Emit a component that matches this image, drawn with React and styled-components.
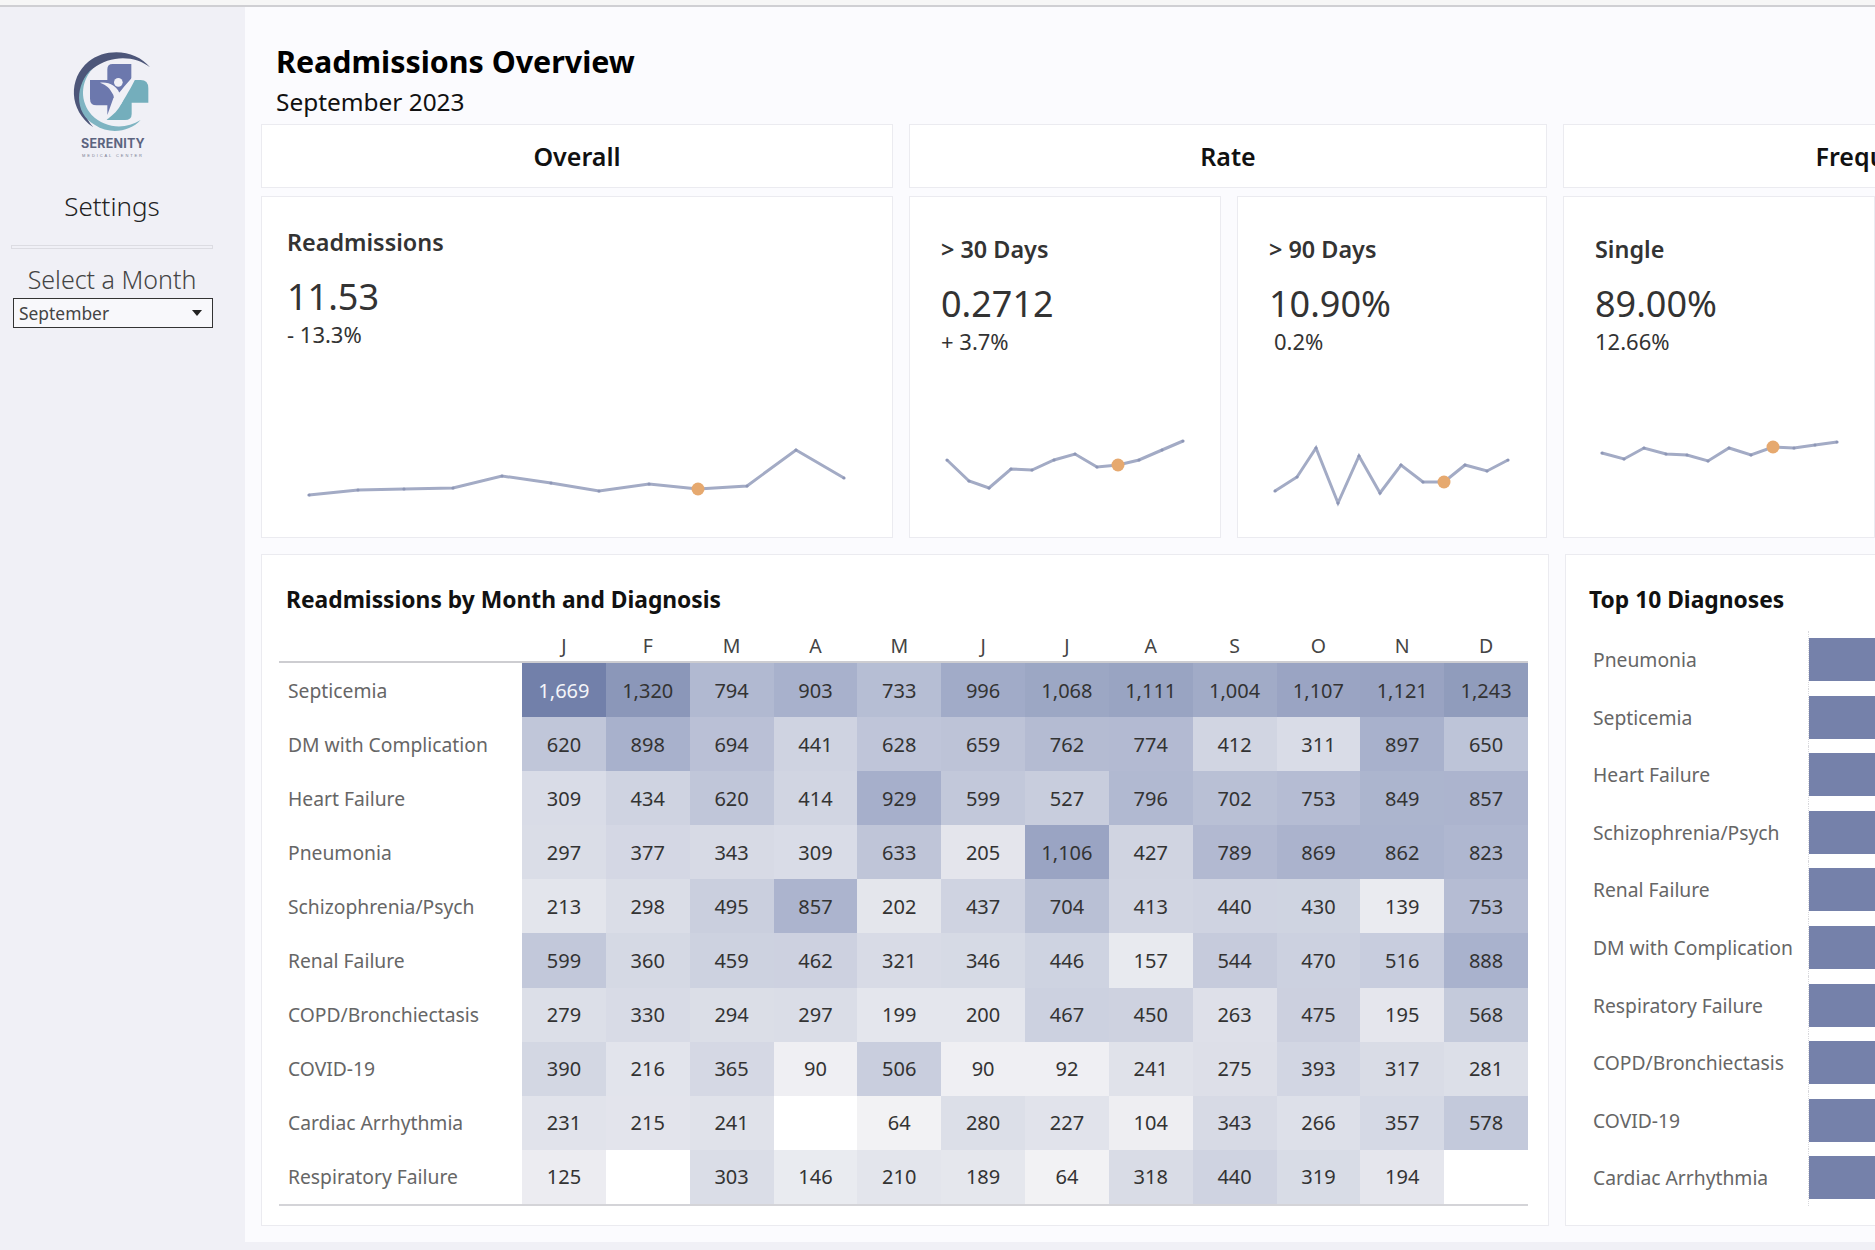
import React from 'react';
import styled, { createGlobalStyle } from 'styled-components';

const FONT = `"Noto Sans", "Open Sans", sans-serif`;

const GlobalStyle = createGlobalStyle`
    html, body {
        margin: 0;
        padding: 0;
        width: 1875px;
        height: 1250px;
        overflow: hidden;
        background: #f0f0f6;
        font-family: ${FONT};
    }
`;

const Page = styled.div`
    width: 1875px;
    height: 1250px;
    overflow: hidden;
    display: flex;
    flex-direction: column;
`;
const TopLine = styled.div`
    height: 5px;
    flex: none;
    background: #f6f6f6;
    border-bottom: 2px solid #cfcfd3;
`;
const Body = styled.div`
    display: flex;
    height: 1235px;
    flex: none;
`;
const Sidebar = styled.aside`
    width: 245px;
    flex: none;
    box-sizing: border-box;
    padding: 33px 32px 0 11px;
    background: #f0f0f6;
    display: flex;
    flex-direction: column;
    align-items: stretch;
`;
const LogoMark = styled.svg`
    display: block;
    width: 130px;
    height: 97px;
    margin: 0 auto;
`;
const LogoName = styled.div`
    text-align: center;
    font-family: "Inter", sans-serif;
    font-weight: 700;
    font-size: 12.5px;
    line-height: 14px;
    letter-spacing: 0.2px;
    padding-left: 2px;
    color: #5c6480;
`;
const LogoSub = styled.div`
    text-align: center;
    font-family: "Liberation Sans", sans-serif;
    font-size: 4px;
    line-height: 8px;
    margin-top: 1px;
    letter-spacing: 1.9px;
    padding-left: 2px;
    color: #777c92;
`;
const SideTitle = styled.div`
    text-align: center;
    font-size: 26px;
    line-height: 34px;
    font-weight: 300;
    color: #222;
    margin-top: 29px;
`;
const Divider = styled.div`
    height: 2px;
    margin-top: 22px;
    border: 1px solid #dcdce2;
    background: #f0f0f6;
`;
const FilterLabel = styled.div`
    text-align: center;
    font-size: 25px;
    line-height: 34px;
    font-weight: 300;
    color: #444;
    margin-top: 13px;
`;
const FilterBox = styled.div`
    margin: 2px 0 0 2px;
    height: 30px;
    box-sizing: border-box;
    border: 1px solid #333;
    background: #f8f8fb;
    display: flex;
    align-items: center;
    justify-content: space-between;
    padding: 0 10px 0 5px;
    font-size: 17.4px;
    color: #444;
`;
const Caret = styled.span`
    width: 0;
    height: 0;
    border-left: 5px solid transparent;
    border-right: 5px solid transparent;
    border-top: 6px solid #222;
`;

const Main = styled.main`
    flex: 1;
    min-width: 0;
    overflow: hidden;
    box-sizing: border-box;
    background: #fbfbfe;
    padding: 35px 0 0 16px;
`;
const Heading = styled.header`
    margin-left: 15px;
    margin-bottom: 6px;
`;
const PageTitle = styled.h1`
    margin: 0 0 4px;
    font-size: 30.4px;
    line-height: 40px;
    font-weight: 700;
    color: #000;
`;
const PageSub = styled.div`
    font-size: 24.4px;
    line-height: 32px;
    color: #111;
`;
const TopRow = styled.div`
    display: flex;
    gap: 16px;
    width: 1900px;
`;
const Section = styled.section`
    width: ${(p) => p.$width}px;
    flex: none;
    display: flex;
    flex-direction: column;
    gap: 8px;
`;
const SectionHead = styled.div`
    height: 64px;
    box-sizing: border-box;
    display: flex;
    align-items: center;
    justify-content: center;
    background: #fff;
    border: 1px solid #ebebf0;
    font-size: 25px;
    font-weight: 600;
    color: #111;
`;
const CardRow = styled.div`
    display: flex;
    gap: 16px;
`;
const Card = styled.div`
    width: ${(p) => (p.$width ? `${p.$width}px` : 'auto')};
    flex: none;
    height: 342px;
    box-sizing: border-box;
    background: #fff;
    border: 1px solid #ebebf0;
    display: flex;
    flex-direction: column;
`;
const CardText = styled.div`
    padding: ${(p) => p.$top}px 0 0 ${(p) => p.$left}px;
`;
const CardTitle = styled.div`
    font-size: 23.4px;
    line-height: 30px;
    font-weight: 600;
    color: #333;
`;
const CardValue = styled.div`
    margin-top: 18px;
    font-size: 36px;
    line-height: 44px;
    color: #333;
`;
const CardDelta = styled.div`
    margin-top: 1px;
    margin-left: ${(p) => p.$indent || 0}px;
    font-size: 22px;
    line-height: 28px;
    color: #333;
`;
const Spark = styled.svg`
    display: block;
    margin-top: auto;
    width: 100%;
    height: 140px;
`;

const BottomRow = styled.div`
    display: flex;
    gap: 16px;
    margin-top: 16px;
    width: 1900px;
`;
const Panel = styled.section`
    width: ${(p) => p.$width}px;
    height: 672px;
    flex: none;
    box-sizing: border-box;
    background: #fff;
    border: 1px solid #ebebf0;
    padding: ${(p) => p.$pad};
`;
const PanelTitle = styled.h2`
    margin: 0 0 0 ${(p) => p.$indent}px;
    font-size: 22.8px;
    line-height: 32px;
    font-weight: 700;
    color: #111;
`;
const HeatGrid = styled.div`
    display: grid;
    grid-template-columns: 243px repeat(12, 1fr);
`;
const HeatHeader = styled(HeatGrid)`
    margin-top: 14px;
    height: 31px;
    border-bottom: 2px solid #cdcdd1;
`;
const HeatHead = styled.div`
    display: flex;
    align-items: center;
    justify-content: center;
    font-size: 19.5px;
    color: #444;
`;
const HeatBody = styled(HeatGrid)`
    grid-auto-rows: 54.1px;
    border-bottom: 2px solid #d4d4d8;
`;
const RowLabel = styled.div`
    display: flex;
    align-items: center;
    padding-left: 9px;
    font-size: 19.3px;
    color: #666;
`;
const stops = [
    [0, [255, 255, 255]],
    [50, [243, 243, 245]],
    [300, [218, 221, 231]],
    [620, [192, 198, 217]],
    [900, [168, 177, 204]],
    [1320, [139, 151, 185]],
    [1669, [114, 128, 170]],
];
const heatColor = (v) => {
    if (v == null) return '#fff';
    for (let i = 1; i < stops.length; i++) {
        if (v <= stops[i][0]) {
            const [a, ca] = stops[i - 1];
            const [b, cb] = stops[i];
            const t = (v - a) / (b - a);
            return `rgb(${ca.map((c, j) => Math.round(c + (cb[j] - c) * t)).join(',')})`;
        }
    }
    return 'rgb(114,128,170)';
};
const HeatCell = styled.div`
    display: flex;
    align-items: center;
    justify-content: center;
    font-size: 20px;
    color: ${(p) => (p.$value > 1500 ? '#f4f5f9' : '#333')};
    background: ${(p) => heatColor(p.$value)};
`;

const BarList = styled.div`
    margin-top: 15px;
    display: grid;
    grid-template-columns: 219px 1fr;
`;
const BarLabel = styled.div`
    display: flex;
    align-items: center;
    height: 57.55px;
    padding-left: 4px;
    font-size: 19.3px;
    color: #666;
`;
const BarCell = styled.div`
    display: flex;
    align-items: center;
    height: 57.55px;
    border-left: 1px dotted #d8d8dc;
`;
const Bar = styled.div`
    height: 43px;
    width: 100%;
    background: #7581aa;
`;

const sparks = {
    readmissions: {
        box: '262 397 630 140',
        pts: [[309, 495], [358, 490], [404, 489], [453, 488], [502, 476], [551, 483], [599, 491], [649, 484], [698, 489], [747, 486], [796, 450], [844, 478]],
    },
    days30: {
        box: '910 397 310 140',
        pts: [[947, 460], [969, 481], [989, 488], [1011, 469], [1032, 470], [1054, 460], [1075, 454], [1097, 467], [1118, 465], [1139, 460], [1162, 450], [1183, 441]],
    },
    days90: {
        box: '1238 397 308 140',
        pts: [[1275, 491], [1297, 477], [1316, 448], [1338, 503], [1359, 456], [1380, 493], [1401, 465], [1423, 482], [1444, 482], [1465, 465], [1487, 471], [1508, 460]],
    },
    single: {
        box: '1564 397 310 140',
        pts: [[1602, 453], [1624, 459], [1644, 448], [1666, 454], [1687, 455], [1708, 461], [1729, 448], [1751, 455], [1773, 447], [1794, 448], [1815, 445], [1837, 442]],
    },
};

const Sparkline = ({ name }) => {
    const { box, pts } = sparks[name];
    const dot = pts[8];
    return (
        <Spark viewBox={box}>
            <polyline points={pts.map((p) => p.join(',')).join(' ')} fill="none" stroke="#a3abc5" strokeWidth="3" />
            {pts.map((p, i) => <circle key={i} cx={p[0]} cy={p[1]} r="1.6" fill="#8d96b6" />)}
            <circle cx={dot[0]} cy={dot[1]} r="6.5" fill="#e6a96f" />
        </Spark>
    );
};

const months = ['J', 'F', 'M', 'A', 'M', 'J', 'J', 'A', 'S', 'O', 'N', 'D'];
const rows = [
    ['Septicemia', [1669, 1320, 794, 903, 733, 996, 1068, 1111, 1004, 1107, 1121, 1243]],
    ['DM with Complication', [620, 898, 694, 441, 628, 659, 762, 774, 412, 311, 897, 650]],
    ['Heart Failure', [309, 434, 620, 414, 929, 599, 527, 796, 702, 753, 849, 857]],
    ['Pneumonia', [297, 377, 343, 309, 633, 205, 1106, 427, 789, 869, 862, 823]],
    ['Schizophrenia/Psych', [213, 298, 495, 857, 202, 437, 704, 413, 440, 430, 139, 753]],
    ['Renal Failure', [599, 360, 459, 462, 321, 346, 446, 157, 544, 470, 516, 888]],
    ['COPD/Bronchiectasis', [279, 330, 294, 297, 199, 200, 467, 450, 263, 475, 195, 568]],
    ['COVID-19', [390, 216, 365, 90, 506, 90, 92, 241, 275, 393, 317, 281]],
    ['Cardiac Arrhythmia', [231, 215, 241, null, 64, 280, 227, 104, 343, 266, 357, 578]],
    ['Respiratory Failure', [125, null, 303, 146, 210, 189, 64, 318, 440, 319, 194, null]],
];
const top10 = ['Pneumonia', 'Septicemia', 'Heart Failure', 'Schizophrenia/Psych', 'Renal Failure', 'DM with Complication', 'Respiratory Failure', 'COPD/Bronchiectasis', 'COVID-19', 'Cardiac Arrhythmia'];

const Logo = () => (
    <LogoMark viewBox="-9 0 390 291">
        <path d="M172 120V88Q172 72 188 72H244V125L190 175L172 225V196H140Q120 196 120 176V120Z" fill="#6c78ad" />
        <path d="M244 120H272Q295 120 295 145V188H245V222Q245 240 225 240H170L215 190Z" fill="#74aebc" />
        <path d="M300 82C260 30 170 20 115 65C55 115 55 210 130 262C85 210 75 130 130 85C180 45 255 45 300 82Z" fill="#4d5679" />
        <path d="M128 85C75 130 70 220 135 255C180 285 240 275 272 240C225 270 165 265 125 225C90 185 90 130 128 85Z" fill="#7fb4c2" />
        <path d="M150 128C180 125 200 140 208 158C225 135 250 110 270 85C255 125 230 165 215 190C205 210 190 225 172 238C190 205 195 180 190 165C180 145 170 135 150 128Z" fill="#f0f0f6" />
        <circle cx="205" cy="127" r="13" fill="#f0f0f6" />
    </LogoMark>
);

const App = () => (
    <Page>
        <GlobalStyle />
        <TopLine />
        <Body>
            <Sidebar>
                <Logo />
                <LogoName>SERENITY</LogoName>
                <LogoSub>MEDICAL CENTER</LogoSub>
                <SideTitle>Settings</SideTitle>
                <Divider />
                <FilterLabel>Select a Month</FilterLabel>
                <FilterBox>September<Caret /></FilterBox>
            </Sidebar>
            <Main>
                <Heading>
                    <PageTitle>Readmissions Overview</PageTitle>
                    <PageSub>September 2023</PageSub>
                </Heading>
                <TopRow>
                    <Section $width={632}>
                        <SectionHead>Overall</SectionHead>
                        <Card>
                            <CardText $top={30} $left={25}>
                                <CardTitle>Readmissions</CardTitle>
                                <CardValue>11.53</CardValue>
                                <CardDelta>- 13.3%</CardDelta>
                            </CardText>
                            <Sparkline name="readmissions" />
                        </Card>
                    </Section>
                    <Section $width={638}>
                        <SectionHead>Rate</SectionHead>
                        <CardRow>
                            <Card $width={312}>
                                <CardText $top={37} $left={31}>
                                    <CardTitle>&gt; 30 Days</CardTitle>
                                    <CardValue>0.2712</CardValue>
                                    <CardDelta>+ 3.7%</CardDelta>
                                </CardText>
                                <Sparkline name="days30" />
                            </Card>
                            <Card $width={310}>
                                <CardText $top={37} $left={31}>
                                    <CardTitle>&gt; 90 Days</CardTitle>
                                    <CardValue>10.90%</CardValue>
                                    <CardDelta $indent={5}>0.2%</CardDelta>
                                </CardText>
                                <Sparkline name="days90" />
                            </Card>
                        </CardRow>
                    </Section>
                    <Section $width={632}>
                        <SectionHead>Frequency</SectionHead>
                        <CardRow>
                            <Card $width={312}>
                                <CardText $top={37} $left={31}>
                                    <CardTitle>Single</CardTitle>
                                    <CardValue>89.00%</CardValue>
                                    <CardDelta>12.66%</CardDelta>
                                </CardText>
                                <Sparkline name="single" />
                            </Card>
                        </CardRow>
                    </Section>
                </TopRow>
                <BottomRow>
                    <Panel $width={1288} $pad="29px 20px 0 17px">
                        <PanelTitle $indent={7}>Readmissions by Month and Diagnosis</PanelTitle>
                        <HeatHeader>
                            <span />
                            {months.map((m, i) => <HeatHead key={i}>{m}</HeatHead>)}
                        </HeatHeader>
                        <HeatBody>
                            {rows.map(([name, vals]) => (
                                <React.Fragment key={name}>
                                    <RowLabel>{name}</RowLabel>
                                    {vals.map((v, i) => <HeatCell key={i} $value={v}>{v == null ? '' : v.toLocaleString('en-US')}</HeatCell>)}
                                </React.Fragment>
                            ))}
                        </HeatBody>
                    </Panel>
                    <Panel $width={620} $pad="29px 0 0 23px">
                        <PanelTitle $indent={0}>Top 10 Diagnoses</PanelTitle>
                        <BarList>
                            {top10.map((name) => (
                                <React.Fragment key={name}>
                                    <BarLabel>{name}</BarLabel>
                                    <BarCell><Bar /></BarCell>
                                </React.Fragment>
                            ))}
                        </BarList>
                    </Panel>
                </BottomRow>
            </Main>
        </Body>
    </Page>
);

export default App;
